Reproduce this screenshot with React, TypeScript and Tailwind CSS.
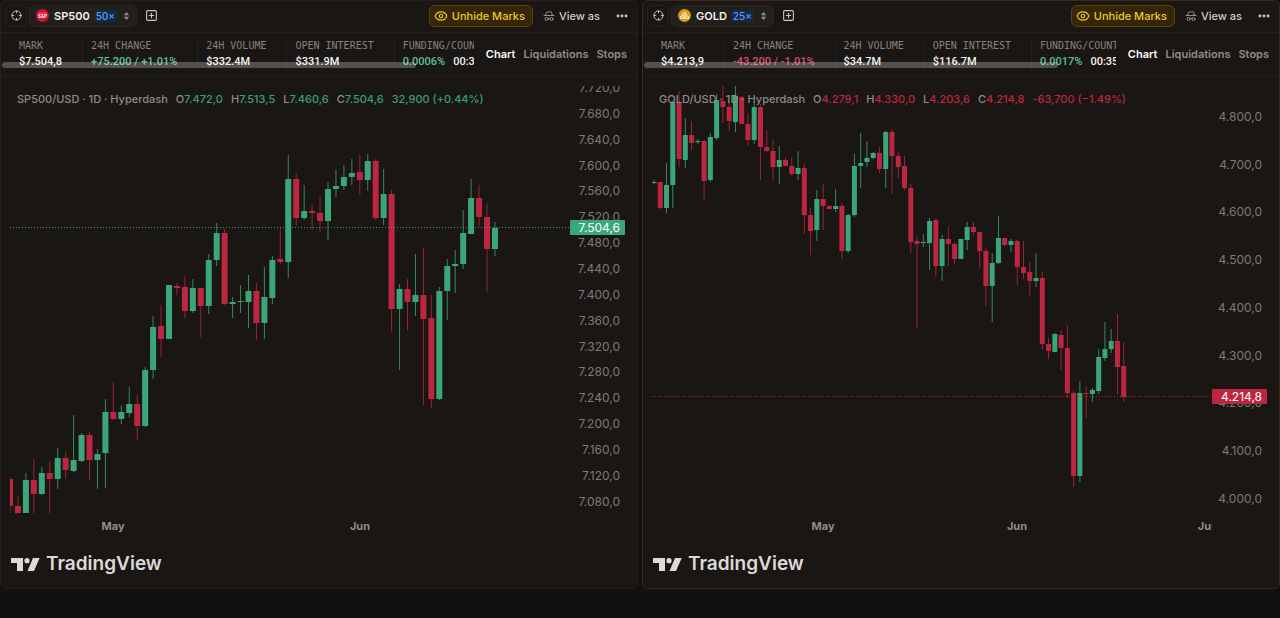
import { Crosshair, Ellipsis, Eye, HatGlasses, SquarePlus } from "lucide-react";
import { useState } from "react";

// [direction, high, body top, body bottom, low]
type Candle = ["u" | "d", number, number, number, number];

interface Market {
  symbol: string;
  leverage: string;
  pair: string;
  up: boolean;
  mark: string;
  change: string;
  volume: string;
  openInterest: string;
  funding: string;
  countdown: string;
  ohlc: [string, string][];
  delta: string;
  lastPrice: string;
  lastY: number;
  firstX: number;
  step: number;
  bodyWidth: number;
  candles: Candle[];
  priceTicks: { label: string; y: number }[];
  timeTicks: { label: string; x: number }[];
}

const GREEN = "#3ba57c";
const RED = "#bd2641";

// top edge of the plot in candle coordinates
const PLOT_TOP = 86;
const PLOT_HEIGHT = 427;

const sp500Candles: Candle[] = [
  ["d", 477, 479, 506, 513],
  ["d", 496, 506, 513, 513],
  ["u", 473, 480, 513, 513],
  ["d", 459, 480, 494, 513],
  ["u", 467, 473, 494, 495],
  ["d", 461, 473, 479, 513],
  ["u", 448, 458, 479, 489],
  ["d", 452, 458, 470, 479],
  ["u", 415, 460, 471, 472],
  ["u", 433, 435, 461, 462],
  ["d", 432, 435, 460, 480],
  ["u", 449, 454, 460, 489],
  ["u", 399, 412, 453, 488],
  ["d", 382, 412, 419, 420],
  ["u", 405, 412, 419, 424],
  ["u", 387, 404, 413, 417],
  ["d", 395, 404, 426, 440],
  ["u", 367, 370, 426, 427],
  ["u", 316, 327, 370, 379],
  ["d", 305, 326, 339, 357],
  ["u", 285, 285, 339, 339],
  ["d", 283, 286, 288, 295],
  ["d", 276, 287, 311, 318],
  ["u", 279, 288, 311, 313],
  ["d", 288, 288, 306, 337],
  ["u", 254, 260, 306, 314],
  ["u", 223, 233, 260, 266],
  ["d", 229, 233, 304, 305],
  ["u", 297, 302, 304, 318],
  ["u", 285, 301, 302, 313],
  ["u", 275, 291, 302, 328],
  ["d", 283, 291, 323, 340],
  ["u", 267, 297, 323, 339],
  ["u", 256, 260, 298, 304],
  ["d", 228, 259, 262, 264],
  ["u", 155, 179, 262, 278],
  ["d", 173, 179, 218, 226],
  ["u", 185, 211, 218, 220],
  ["d", 205, 211, 213, 230],
  ["d", 197, 213, 221, 232],
  ["u", 182, 189, 221, 240],
  ["u", 170, 186, 189, 197],
  ["u", 165, 177, 186, 190],
  ["u", 159, 173, 177, 185],
  ["d", 155, 172, 180, 195],
  ["u", 154, 161, 180, 191],
  ["d", 159, 161, 218, 220],
  ["u", 169, 194, 218, 225],
  ["d", 190, 194, 309, 332],
  ["u", 284, 289, 309, 370],
  ["d", 279, 289, 302, 330],
  ["u", 254, 295, 302, 316],
  ["d", 248, 295, 319, 405],
  ["d", 295, 318, 399, 408],
  ["u", 287, 291, 399, 400],
  ["u", 259, 266, 291, 320],
  ["u", 250, 264, 266, 293],
  ["u", 210, 233, 264, 269],
  ["u", 179, 198, 234, 234],
  ["d", 185, 198, 217, 226],
  ["d", 204, 217, 249, 292],
  ["u", 222, 228, 249, 256],
];

const goldCandles: Candle[] = [
  ["u", 180, 182, 183, 184],
  ["d", 182, 182, 208, 209],
  ["u", 163, 185, 208, 213],
  ["u", 101, 102, 185, 208],
  ["d", 91, 102, 159, 167],
  ["u", 118, 135, 160, 168],
  ["d", 121, 135, 143, 150],
  ["u", 139, 141, 142, 144],
  ["d", 140, 141, 181, 199],
  ["u", 133, 137, 180, 182],
  ["u", 94, 100, 138, 140],
  ["d", 86, 101, 107, 123],
  ["d", 102, 107, 121, 131],
  ["u", 86, 96, 122, 132],
  ["d", 96, 97, 124, 124],
  ["d", 113, 124, 140, 146],
  ["u", 102, 107, 140, 144],
  ["d", 104, 107, 147, 180],
  ["d", 130, 147, 151, 152],
  ["d", 140, 151, 167, 181],
  ["u", 146, 160, 167, 184],
  ["d", 157, 160, 166, 166],
  ["d", 157, 166, 174, 176],
  ["u", 151, 168, 174, 180],
  ["d", 164, 168, 215, 234],
  ["d", 208, 215, 231, 255],
  ["u", 190, 199, 230, 241],
  ["d", 184, 199, 206, 230],
  ["d", 205, 206, 209, 209],
  ["u", 189, 206, 209, 212],
  ["d", 203, 206, 251, 259],
  ["u", 214, 215, 251, 253],
  ["u", 154, 166, 215, 217],
  ["u", 133, 163, 166, 188],
  ["u", 141, 158, 162, 167],
  ["u", 152, 153, 158, 159],
  ["d", 147, 153, 169, 173],
  ["u", 131, 132, 169, 188],
  ["d", 129, 132, 156, 194],
  ["d", 152, 156, 167, 178],
  ["d", 156, 166, 188, 190],
  ["d", 184, 188, 242, 253],
  ["d", 237, 241, 244, 328],
  ["u", 234, 242, 243, 247],
  ["u", 218, 221, 243, 270],
  ["d", 218, 220, 266, 276],
  ["u", 235, 239, 266, 281],
  ["d", 227, 239, 244, 266],
  ["d", 242, 244, 259, 264],
  ["u", 239, 239, 259, 259],
  ["u", 222, 227, 240, 250],
  ["d", 222, 227, 232, 236],
  ["d", 232, 232, 251, 268],
  ["d", 248, 251, 286, 306],
  ["u", 253, 263, 286, 322],
  ["u", 216, 238, 263, 264],
  ["d", 238, 238, 245, 246],
  ["u", 239, 241, 245, 252],
  ["d", 240, 241, 267, 285],
  ["d", 241, 267, 273, 279],
  ["d", 262, 272, 281, 296],
  ["u", 253, 278, 281, 287],
  ["d", 272, 278, 344, 349],
  ["d", 338, 344, 351, 359],
  ["u", 333, 334, 352, 352],
  ["d", 330, 335, 348, 370],
  ["d", 325, 348, 393, 398],
  ["d", 391, 393, 476, 487],
  ["u", 381, 393, 476, 482],
  ["d", 386, 393, 394, 418],
  ["u", 388, 390, 394, 402],
  ["u", 349, 357, 391, 394],
  ["u", 322, 349, 358, 361],
  ["u", 329, 341, 349, 353],
  ["d", 314, 341, 367, 394],
  ["d", 342, 366, 397, 402],
];

const priceTicks = (from: number, by: number, count: number, y: number, gap: number) =>
  Array.from({ length: count }, (_, i) => {
    const value = from - i * by;
    const rest = String(value % 1000).padStart(3, "0");
    return { label: `${Math.floor(value / 1000)}.${rest},0`, y: y + i * gap };
  });

const markets: Market[] = [
  {
    symbol: "SP500",
    leverage: "50×",
    pair: "SP500/USD",
    up: true,
    mark: "$7.504,8",
    change: "+75.200 / +1.01%",
    volume: "$332.4M",
    openInterest: "$331.9M",
    funding: "0.0006%",
    countdown: "00:35:12",
    ohlc: [
      ["O", "7.472,0"],
      ["H", "7.513,5"],
      ["L", "7.460,6"],
      ["C", "7.504,6"],
    ],
    delta: "32,900 (+0.44%)",
    lastPrice: "7.504,6",
    lastY: 228,
    firstX: 0,
    step: 7.95,
    bodyWidth: 6,
    candles: sp500Candles,
    priceTicks: priceTicks(7720, 40, 17, 88, 25.86),
    timeTicks: [
      { label: "May", x: 103 },
      { label: "Jun", x: 350 },
    ],
  },
  {
    symbol: "GOLD",
    leverage: "25×",
    pair: "GOLD/USD",
    up: false,
    mark: "$4.213,9",
    change: "-43.200 / -1.01%",
    volume: "$34.7M",
    openInterest: "$116.7M",
    funding: "0.0017%",
    countdown: "00:35:12",
    ohlc: [
      ["O", "4.279,1"],
      ["H", "4.330,0"],
      ["L", "4.203,6"],
      ["C", "4.214,8"],
    ],
    delta: "-63,700 (−1.49%)",
    lastPrice: "4.214,8",
    lastY: 397,
    firstX: 2,
    step: 6.263,
    bodyWidth: 5,
    candles: goldCandles,
    priceTicks: priceTicks(4800, 100, 9, 117, 47.7),
    timeTicks: [
      { label: "May", x: 171 },
      { label: "Jun", x: 365 },
      { label: "Jul", x: 554 },
    ],
  },
];

const SymbolLogo = ({ symbol }: { symbol: string }) => {
  if (symbol === "SP500") {
    return (
      <svg viewBox="0 0 26 26" className="size-[13px]" aria-hidden="true">
        <circle cx="13" cy="13" r="13" fill="#d80f2f" />
        <text x="13" y="17" textAnchor="middle" fontSize="9" fontWeight="700" fill="#fff">
          S&amp;P
        </text>
        <path d="M5 8h16" stroke="#fff" strokeWidth="1" opacity="0.6" />
      </svg>
    );
  }
  return (
    <svg viewBox="0 0 26 26" className="size-[13px]" aria-hidden="true">
      <circle cx="13" cy="13" r="13" fill="#d99a0b" />
      <g fill="none" stroke="#fff" strokeWidth="1.8" strokeLinejoin="round">
        <path d="M10.500 7.500h5l1.500 4.500H9z" />
        <path d="M6 14h5l1.500 4.500H4.500z" />
        <path d="M15 14h5l1.500 4.500h-8z" />
      </g>
    </svg>
  );
};

const SortArrows = () => (
  <svg viewBox="0 0 8 10" className="h-2 w-[7px]" fill="#8f8c88" aria-hidden="true">
    <path d="M4 0l3.400 4H.6z" />
    <path d="M4 10L.6 6h6.800z" />
  </svg>
);

const TradingViewLogo = () => (
  <a href="#tradingview" className="flex items-center gap-1.5 text-[#dcdad9]">
    <svg viewBox="0 0 29 13" className="h-[13px] w-[29px]" fill="currentColor" aria-hidden="true">
      <path d="M0 0h12v13H6V5H0z" />
      <circle cx="16" cy="2.700" r="2.600" />
      <path d="M22 0h6.700L23 13h-6.500z" />
    </svg>
    <span className="text-[19px] leading-5 font-semibold">TradingView</span>
  </a>
);

interface StatProps {
  label: string;
  children: React.ReactNode;
}

const Stat = ({ label, children }: StatProps) => (
  <div className="shrink-0 border-r border-[#23201d] pr-5 pl-2 last:border-r-0">
    <dt className="font-['DejaVu_Sans_Mono',monospace] text-[10px] leading-4 text-[#85827e]">
      {label}
    </dt>
    <dd className="font-[Roboto,sans-serif] text-[11px] leading-4 font-medium text-[#f2f1f0]">
      {children}
    </dd>
  </div>
);

const Chart = ({ market }: { market: Market }) => {
  const tone = market.up ? GREEN : RED;

  return (
    <div className="relative flex pt-[9px] pl-[9px]">
      <div className="min-w-0 flex-1">
        <svg className="block w-full" height={PLOT_HEIGHT} role="img" aria-label={market.pair}>
          <g transform={`translate(0 ${-PLOT_TOP})`}>
            {market.candles.map(([dir, high, top, bottom, low], i) => {
              const x = market.firstX + i * market.step;
              return (
                <g key={i} fill={dir === "u" ? GREEN : RED}>
                  <rect x={x - 0.5} y={high} width="1" height={low - high} opacity="0.8" />
                  <rect
                    x={x - market.bodyWidth / 2}
                    y={top}
                    width={market.bodyWidth}
                    height={bottom - top}
                  />
                </g>
              );
            })}
            <line
              x1="0"
              x2="100%"
              y1={market.lastY - 0.5}
              y2={market.lastY - 0.5}
              stroke={tone}
              strokeDasharray="1 2"
              opacity="0.9"
            />
          </g>
        </svg>
        <svg className="block h-[27px] w-full" fontSize="11" fontWeight="700" fill="#8f8b87">
          {market.timeTicks.map((tick) => (
            <text key={tick.label} x={tick.x} y="17" textAnchor="middle">
              {tick.label}
            </text>
          ))}
        </svg>
      </div>

      <svg className="block w-[67px]" height={PLOT_HEIGHT} fontSize="12" fill="#7d7a76">
        <g transform={`translate(0 ${-PLOT_TOP})`}>
          {market.priceTicks.map((tick) => (
            <text key={tick.label} x="50" y={tick.y + 4} textAnchor="end">
              {tick.label}
            </text>
          ))}
          <rect x="0" y={market.lastY - 8} width="55" height="15" rx="1" fill={tone} />
          <text x="50" y={market.lastY + 4} textAnchor="end" fill="#fff">
            {market.lastPrice}
          </text>
        </g>
      </svg>

      <div className="absolute top-3.5 left-4 flex gap-2 text-[11px] leading-4 font-medium whitespace-nowrap text-[#8f8c88]">
        <span>{market.pair} · 1D · Hyperdash</span>
        {market.ohlc.map(([key, value]) => (
          <span key={key}>
            {key}
            <span className={market.up ? "text-[#38a077]" : "text-[#bd2641]"}>{value}</span>
          </span>
        ))}
        <span className={market.up ? "text-[#38a077]" : "text-[#bd2641]"}>{market.delta}</span>
      </div>
    </div>
  );
};

const tabs = ["Chart", "Liquidations", "Stops"];

const MarketPanel = ({ market }: { market: Market }) => {
  const [activeTab, setActiveTab] = useState("Chart");
  const tone = market.up ? "text-[#5cc09a]" : "text-[#dc4a68]";

  return (
    <section
      className={`flex min-w-0 flex-col overflow-hidden rounded-md border bg-[#1a1613] ${
        market.up ? "border-[#23201d]" : "border-[#43241b]"
      }`}
    >
      <header className="flex h-8 items-center border-b border-[#23201d] pr-2 pb-0.5 pl-1">
        <button
          type="button"
          aria-label="Link panel"
          className="flex size-[22px] items-center justify-center rounded-md border border-[#26231f] text-[#c9c7c4]"
        >
          <Crosshair size={11} />
        </button>
        <button
          type="button"
          className="ml-0.5 flex h-[22px] items-center rounded-md border border-[#2a2723] bg-[#23201c] pr-1 pl-1.5 text-[#f2f1f0]"
        >
          <SymbolLogo symbol={market.symbol} />
          <span className="ml-[5px] text-[11px] leading-4 font-semibold">{market.symbol}</span>
          <span className="mx-1 rounded-sm bg-[#13294a] px-0.5 text-[10px] leading-3 font-medium text-[#5b9ee6]">
            {market.leverage}
          </span>
          <span className="px-0.5">
            <SortArrows />
          </span>
        </button>
        <button type="button" aria-label="Add panel" className="ml-2 text-[#c9c7c4]">
          <SquarePlus size={13} />
        </button>

        <div className="ml-auto flex items-center text-[#cfccc9]">
          <button
            type="button"
            className="flex h-[22px] items-center gap-1 rounded-md border border-[#5a4509] bg-[#352704] px-1 pr-[7px] text-[11px] leading-4 font-medium whitespace-nowrap text-[#f2c52c]"
          >
            <Eye size={14} />
            Unhide Marks
          </button>
          <button
            type="button"
            className="ml-2.5 flex items-center gap-1 text-[11px] leading-4 font-medium whitespace-nowrap"
          >
            <HatGlasses size={12} className="text-[#96938f]" />
            View as
          </button>
          <button type="button" aria-label="More" className="ml-[15px]">
            <Ellipsis size={14} strokeWidth={3} />
          </button>
        </div>
      </header>

      <div className="flex h-11 items-center border-b border-[#23201d] pr-2.5">
        <div className="relative min-w-0 flex-1 self-stretch overflow-hidden">
          <dl className="flex pt-[5px] pl-2.5 whitespace-nowrap">
            <Stat label="MARK">{market.mark}</Stat>
            <Stat label="24H CHANGE">
              <span className={tone}>{market.change}</span>
            </Stat>
            <Stat label="24H VOLUME">{market.volume}</Stat>
            <Stat label="OPEN INTEREST">{market.openInterest}</Stat>
            <Stat label="FUNDING/COUNTDOWN">
              <span className="mr-2 text-[#5cc09a]">{market.funding}</span>
              {market.countdown}
            </Stat>
          </dl>
          <div className="absolute bottom-2 left-px h-1.5 w-7/8 rounded-full bg-white/25" />
        </div>
        <nav className="ml-3 flex gap-2 pb-0.5 text-[11px] leading-4 font-semibold">
          {tabs.map((tab) => (
            <button
              key={tab}
              type="button"
              onClick={() => setActiveTab(tab)}
              className={activeTab === tab ? "text-white" : "text-[#8f8b87]"}
            >
              {tab}
            </button>
          ))}
        </nav>
      </div>

      <Chart market={market} />

      <footer className="flex pt-3.5 pb-3.5 pl-2.5">
        <TradingViewLogo />
      </footer>
    </section>
  );
};

const App: React.FC = () => {
  return (
    <main className="min-h-screen bg-[#12110f] font-[Inter,sans-serif]">
      <div className="grid grid-cols-2 gap-1">
        {markets.map((market) => (
          <MarketPanel key={market.symbol} market={market} />
        ))}
      </div>
    </main>
  );
};

export default App;
